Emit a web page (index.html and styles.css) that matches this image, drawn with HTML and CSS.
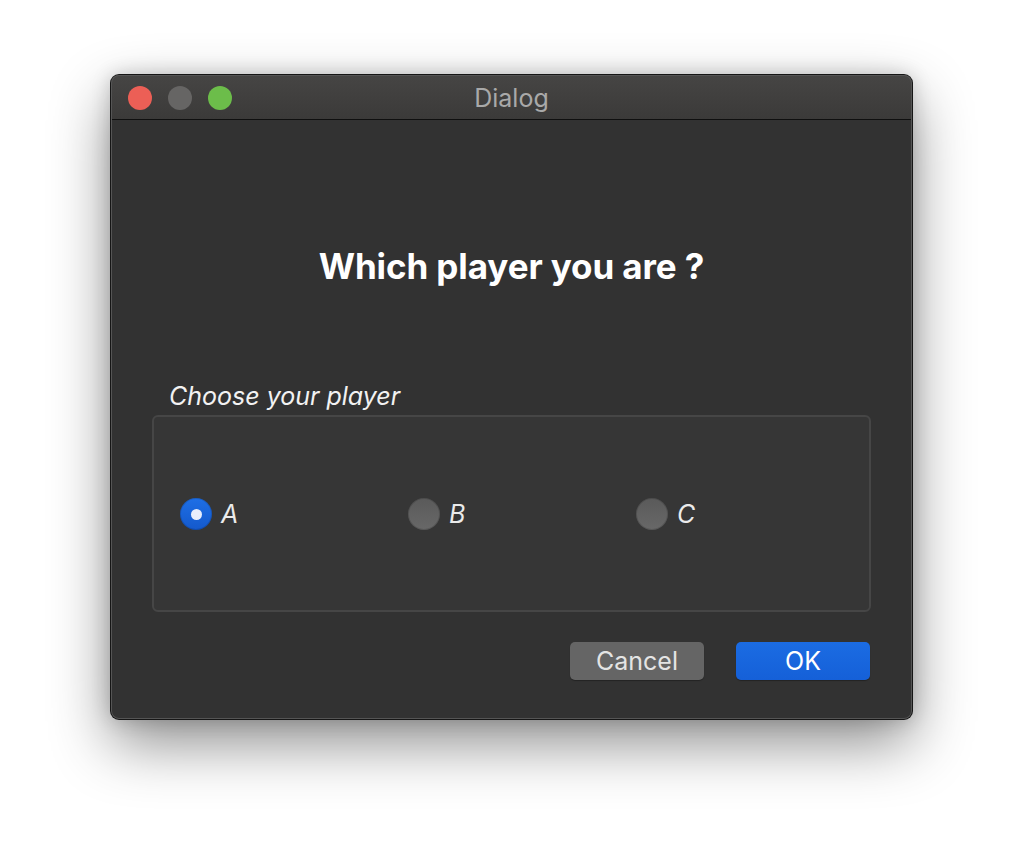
FILE: index.html
```html
<!DOCTYPE html>
<html>
<head>
<meta charset="utf-8">
<link rel="stylesheet" href="styles.css">
</head>
<body>
<div class="window">
  <div class="titlebar">
    <div class="lights">
      <span class="light red"></span>
      <span class="light gray"></span>
      <span class="light green"></span>
    </div>
    <div class="title">Dialog</div>
  </div>
  <div class="content">
    <h1 class="heading">Which player you are ?</h1>
    <div class="group-label">Choose your player</div>
    <div class="group">
      <label class="radio"><span class="dot checked"></span><span class="rlabel">A</span></label>
      <label class="radio"><span class="dot"></span><span class="rlabel">B</span></label>
      <label class="radio"><span class="dot"></span><span class="rlabel">C</span></label>
    </div>
    <div class="buttons">
      <button class="btn cancel">Cancel</button>
      <button class="btn ok">OK</button>
    </div>
  </div>
</div>
</body>
</html>
```
FILE: styles.css
```css
html, body {
  margin: 0;
  padding: 0;
  background: #ffffff;
}
body {
  width: 1024px;
  height: 868px;
  padding: 75px 0 0 111px;
  box-sizing: border-box;
  font-family: Inter, "Liberation Sans", sans-serif;
  overflow: hidden;
}
.window {
  width: 801px;
  height: 644px;
  background: #323232;
  border-radius: 8px;
  box-shadow: 0 0 0 1px #161616, 0 24px 60px rgba(0,0,0,0.45), 0 0 20px rgba(0,0,0,0.2);
  overflow: hidden;
  display: flex;
  flex-direction: column;
  position: relative;
}
.window::after {
  content: "";
  position: absolute;
  inset: 0;
  border-radius: 8px;
  box-shadow: inset 0 0 0 1px #555555;
  pointer-events: none;
}
.titlebar {
  height: 44px;
  background: linear-gradient(#464544, #3b3a39);
  border-bottom: 1px solid #0f0f0f;
  display: flex;
  align-items: center;
  position: relative;
  flex-shrink: 0;
}
.lights {
  display: flex;
  gap: 16px;
  padding-left: 17px;
  padding-top: 1px;
}
.light {
  width: 24px;
  height: 24px;
  border-radius: 50%;
  display: block;
}
.red { background: #ec5f56; }
.gray { background: #666564; }
.green { background: #6cbd4a; }
.title {
  position: absolute;
  inset: 0;
  display: flex;
  align-items: center;
  justify-content: center;
  padding-top: 2px;
  color: #a9a9a9;
  font-size: 25px;
  pointer-events: none;
}
.content {
  flex: 1;
  display: flex;
  flex-direction: column;
  padding: 126px 41px 0 41px;
}
.heading {
  margin: 0;
  text-align: center;
  font-size: 35px;
  line-height: 40px;
  font-weight: 700;
  color: #ffffff;
  letter-spacing: -0.1px;
}
.group-label {
  margin-top: 95px;
  padding-left: 17px;
  font-size: 25px;
  line-height: 30px;
  font-style: italic;
  color: #f2f2f2;
}
.group {
  margin-top: 4px;
  height: 197px;
  box-sizing: border-box;
  border: 2px solid #464646;
  border-radius: 6px;
  background: #363636;
  display: flex;
  align-items: center;
  padding-left: 26px;
  padding-top: 1px;
}
.radio {
  width: 228px;
  display: flex;
  align-items: center;
  gap: 9px;
}
.dot {
  width: 32px;
  height: 32px;
  border-radius: 50%;
  box-sizing: border-box;
  background: linear-gradient(#5a5a5a, #686868);
  box-shadow: inset 0 0 0 1px rgba(0,0,0,0.15);
  display: flex;
  align-items: center;
  justify-content: center;
}
.dot.checked {
  background: linear-gradient(#1e6fe6, #1459cc);
}
.dot.checked::after {
  content: "";
  width: 11px;
  height: 11px;
  border-radius: 50%;
  background: #e8eefc;
}
.rlabel {
  font-size: 25px;
  font-style: italic;
  color: #ebebeb;
}
.buttons {
  margin-top: 30px;
  display: flex;
  justify-content: flex-end;
  gap: 32px;
  padding-right: 1px;
}
.btn {
  width: 134px;
  height: 38px;
  border: none;
  border-radius: 5px;
  font-family: Inter, "Liberation Sans", sans-serif;
  font-size: 25px;
  padding: 0;
}
.cancel {
  background: #656565;
  color: #e4e4e4;
  box-shadow: 0 1px 1px rgba(0,0,0,0.3);
}
.ok {
  background: linear-gradient(#1b6ce3, #1560d8);
  color: #ffffff;
  box-shadow: 0 1px 1px rgba(0,0,0,0.3);
}
```
